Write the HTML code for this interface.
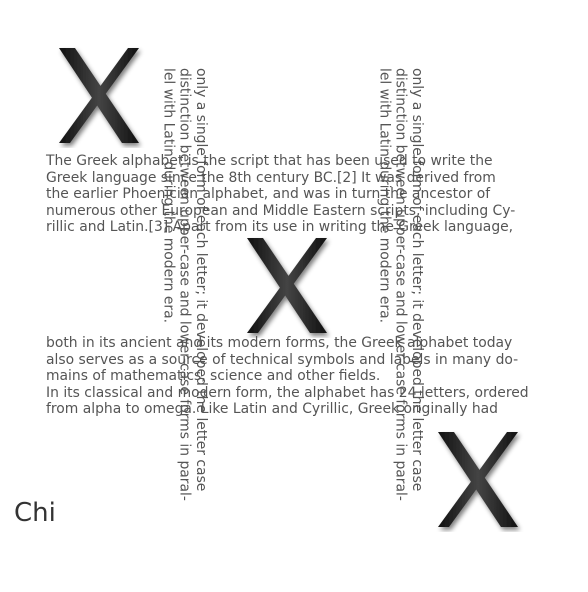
<!DOCTYPE html>
<html><head><meta charset="utf-8"><style>
body{margin:0;width:588px;height:592px;background:#fff;position:relative;overflow:hidden;font-family:"DejaVu Sans","Liberation Sans",sans-serif;}
.x{position:absolute;width:90px;height:102px;}
.p{position:absolute;left:46px;width:520px;font-size:13.9px;line-height:16.5px;color:#555;margin:0;white-space:nowrap;}
.v{position:absolute;writing-mode:vertical-rl;font-size:13.9px;line-height:16.3px;color:#555;height:460px;white-space:nowrap;}
.chi{position:absolute;left:14px;top:498px;font-size:26px;color:#333;}
</style></head><body>
<svg width="0" height="0" style="position:absolute">
<defs>
<linearGradient id="g" x1="0" y1="0" x2="1" y2="0"><stop offset="0" stop-color="#111"/><stop offset="0.5" stop-color="#444"/><stop offset="1" stop-color="#111"/></linearGradient>
<filter id="s" x="-20%" y="-20%" width="140%" height="140%"><feGaussianBlur in="SourceAlpha" stdDeviation="2.5"/><feOffset dx="2" dy="3"/><feComponentTransfer><feFuncA type="linear" slope="0.5"/></feComponentTransfer><feMerge><feMergeNode/><feMergeNode in="SourceGraphic"/></feMerge></filter>
<g id="X"><polygon points="3,2 19,2 83,97 66,97" fill="url(#g)"/><polygon points="72,2 83,2 14,97 3,97" fill="url(#g)"/></g>
</defs></svg>
<svg class="x" style="left:56px;top:46px" viewBox="0 0 90 102"><use href="#X" filter="url(#s)"/></svg>
<svg class="x" style="left:244px;top:236px" viewBox="0 0 90 102"><use href="#X" filter="url(#s)"/></svg>
<svg class="x" style="left:435px;top:430px" viewBox="0 0 90 102"><use href="#X" filter="url(#s)"/></svg>
<div class="v" style="left:160px;top:68px">only a single form of each letter; it developed the letter case<br>distinction between upper-case and lower-case forms in paral-<br>lel with Latin during the modern era.</div>
<div class="v" style="left:376px;top:68px">only a single form of each letter; it developed the letter case<br>distinction between upper-case and lower-case forms in paral-<br>lel with Latin during the modern era.</div>
<p class="p" style="top:153px">The Greek alphabet is the script that has been used to write the<br>Greek language since the 8th century BC.[2] It was derived from<br>the earlier Phoenician alphabet, and was in turn the ancestor of<br>numerous other European and Middle Eastern scripts, including Cy-<br>rillic and Latin.[3] Apart from its use in writing the Greek language,</p>
<p class="p" style="top:335px">both in its ancient and its modern forms, the Greek alphabet today<br>also serves as a source of technical symbols and labels in many do-<br>mains of mathematics, science and other fields.<br>In its classical and modern form, the alphabet has 24 letters, ordered<br>from alpha to omega. Like Latin and Cyrillic, Greek originally had</p>
<div class="chi">Chi</div>
</body></html>
